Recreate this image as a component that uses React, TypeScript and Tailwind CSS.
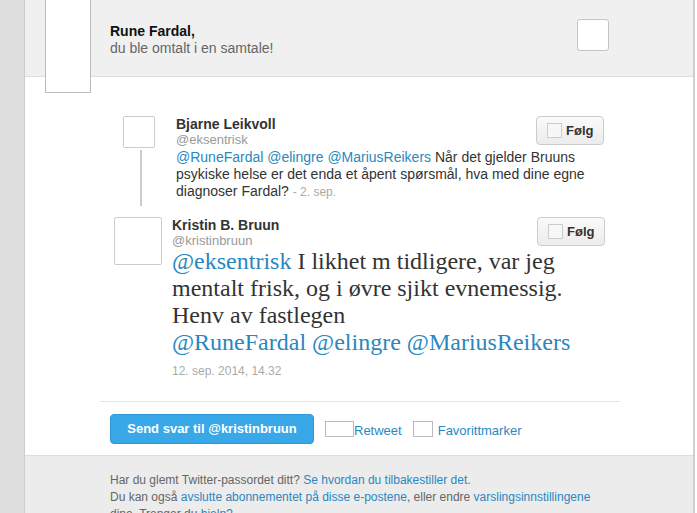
import React from "react";

const sans = { fontFamily: '"Liberation Sans", Arial, sans-serif' };

const FollowButton = () => (
  <button className="flex h-[29px] w-[68px] shrink-0 items-center gap-[4px] rounded-[4px] border border-[#cccccc] bg-gradient-to-b from-[#fafafa] to-[#ececec] pl-[10px] text-[13px] font-bold text-[#333]">
    <span className="block h-[15px] w-[15px] border border-[#cccccc] bg-[#f7f7f7]" />
    Følg
  </button>
);

const Link = ({ children }: { children: React.ReactNode }) => (
  <span className="text-[#2a87bf]">{children}</span>
);

export default function App() {
  return (
    <div className="flex h-[513px] w-[697px] overflow-hidden bg-white" style={sans}>
      {/* left gutter */}
      <div className="w-[25px] shrink-0 border-r border-[#cccccc] bg-[#dddddd]" />

      <div className="flex w-[670px] shrink-0 flex-col border-r-2 border-[#cfcfcf]">
        {/* header */}
        <div className="relative flex h-[77px] shrink-0 items-center justify-between border-b border-[#dddddd] bg-[#f0f0f0] pl-[85px] pr-[84px]">
          <div className="absolute left-[20px] top-[-10px] h-[103px] w-[46px] border border-[#bbbbbb] bg-white" />
          <div className="mt-[3px] text-[14px] leading-[17px]">
            <div className="font-bold text-[#111]">Rune Fardal,</div>
            <div className="text-[#666]">du ble omtalt i en samtale!</div>
          </div>
          <div className="mt-[-7px] h-[32px] w-[32px] rounded-[3px] border border-[#c4c4c4] bg-white" />
        </div>

        {/* conversation */}
        <div className="flex-1 pl-[75px] pr-[73px] pt-[39px]">
          {/* first tweet */}
          <div className="flex">
            <div className="ml-[23px] flex w-[32px] shrink-0 flex-col items-center">
              <div className="h-[32px] w-[32px] rounded-[2px] border border-[#cccccc] bg-white" />
              <div className="ml-[3px] mt-[2px] h-[56px] w-[2px] bg-[#cccccc]" />
            </div>
            <div className="ml-[21px] mr-[16px] flex-1">
              <div className="flex justify-between">
                <div>
                  <div className="text-[14px] font-bold leading-[16px] text-[#333]">Bjarne Leikvoll</div>
                  <div className="text-[13px] leading-[15px] text-[#999]">@eksentrisk</div>
                </div>
                <FollowButton />
              </div>
              <p className="mt-[2px] text-[14px] leading-[17px] text-[#333]">
                <Link>@RuneFardal @elingre @MariusReikers</Link> Når det gjelder Bruuns psykiske helse er det enda et åpent spørsmål, hva med dine egne diagnoser Fardal?{" "}
                <span className="text-[12px] text-[#aaa]">- 2. sep.</span>
              </p>
            </div>
          </div>

          {/* main tweet */}
          <div className="mt-[11px] flex">
            <div className="ml-[14px] h-[48px] w-[48px] shrink-0 rounded-[2px] border border-[#cccccc] bg-white" />
            <div className="ml-[10px] mr-[16px] flex-1">
              <div className="flex justify-between">
                <div>
                  <div className="text-[14px] font-bold leading-[16px] text-[#333]">Kristin B. Bruun</div>
                  <div className="text-[13px] leading-[15px] text-[#999]">@kristinbruun</div>
                </div>
                <div className="mr-[-1px]">
                  <FollowButton />
                </div>
              </div>
              <p
                className="text-[24px] leading-[27px] text-[#333]"
                style={{ fontFamily: '"Liberation Serif", Georgia, serif' }}
              >
                <Link>@eksentrisk</Link> I likhet m tidligere, var jeg mentalt frisk, og i øvre sjikt evnemessig. Henv av fastlegen
                <br />
                <Link>@RuneFardal @elingre @MariusReikers</Link>
              </p>
              <div className="mt-[8px] text-[12px] leading-[15px] text-[#aaa]">12. sep. 2014, 14.32</div>
            </div>
          </div>

          <div className="mt-[22px] h-px bg-[#e5e5e5]" />

          <div className="flex items-center pl-[10px] pt-[12px]">
            <button className="h-[30px] w-[204px] rounded-[4px] border border-[#2e97d6] bg-[#38a8e8] text-[13px] font-bold text-white">
              Send svar til @kristinbruun
            </button>
            <span className="ml-[11px] block h-[16px] w-[29px] border border-[#bbbbbb] bg-white" />
            <span className="mt-[4px] text-[13px] text-[#2a87bf]">Retweet</span>
            <span className="ml-[11px] block h-[16px] w-[20px] border border-[#bbbbbb] bg-white" />
            <span className="ml-[5px] mt-[4px] text-[13px] text-[#2a87bf]">Favorittmarker</span>
          </div>
        </div>

        {/* footer */}
        <div className="h-[58px] shrink-0 border-t border-[#dddddd] bg-[#ececec] pl-[85px] pr-[94px] pt-[16px]">
          <p className="text-[12px] leading-[17px] text-[#666]">
            Har du glemt Twitter-passordet ditt? <Link>Se hvordan du tilbakestiller det.</Link>
            <br />
            Du kan også <Link>avslutte abonnementet på disse e-postene</Link>, eller endre{" "}
            <Link>varslingsinnstillingene</Link> dine. Trenger du <Link>hjelp?</Link>
          </p>
        </div>
      </div>
    </div>
  );
}
